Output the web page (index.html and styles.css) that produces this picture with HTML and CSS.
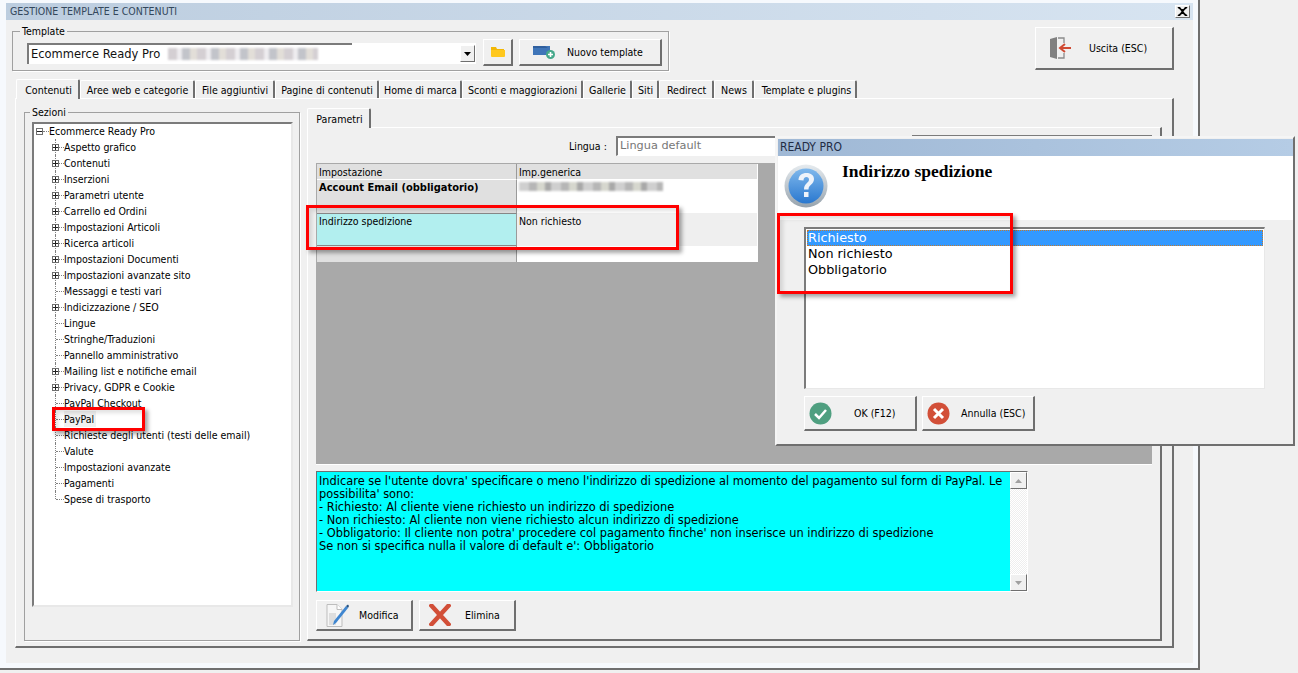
FILE: index.html
```html
<!DOCTYPE html>
<html lang="it">
<head>
<meta charset="utf-8">
<title>Gestione template e contenuti</title>
<link rel="stylesheet" href="styles.css">
</head>
<body>
<div class="window">
  <div class="inner">
    <div class="titlebar">
      <span>GESTIONE TEMPLATE E CONTENUTI</span>
      <span class="close">
        <svg width="11" height="9" viewBox="0 0 11 9"><path d="M1 0l4.500 3.500L10 0M1 9l4.500-3.500L10 9M2 0l7 9M9 0l-7 9" fill="none" stroke="#000" stroke-width="1.600"/></svg>
      </span>
    </div>

    <div class="topbar">
      <fieldset class="group template-group">
        <legend>Template</legend>
        <div class="template-row">
          <div class="combo">
            <span class="combo-text">Ecommerce Ready Pro</span>
            <span class="blur blur-a"></span>
            <span class="combo-arrow"><svg width="7" height="4" viewBox="0 0 7 4"><path d="M0 0h7L3.500 4z" fill="#000"/></svg></span>
          </div>
          <button class="btn btn-folder" type="button">
            <svg width="14" height="10" viewBox="0 0 14 10"><path d="M0 0h5l1 2h7v2H0z" fill="#f2b705"/><path d="M0 3h14v6a1 1 0 0 1-1 1H1a1 1 0 0 1-1-1z" fill="#ffc81e"/></svg>
          </button>
          <button class="btn btn-new" type="button">
            <svg width="23" height="13" viewBox="0 0 23 13"><rect x="0" y="0" width="17" height="9" fill="#3f75b8"/><path d="M0 0h12l3 2H0z" fill="#2f5f9e"/><circle cx="17.500" cy="8.500" r="4.500" fill="#45a88a"/><path d="M17.500 6v5M15 8.500h5" stroke="#fff" stroke-width="1.600"/></svg>
            <span>Nuovo template</span>
          </button>
        </div>
      </fieldset>
      <button class="btn btn-exit" type="button">
        <svg width="21" height="22" viewBox="0 0 21 22"><path d="M0 2l7-2v22l-7-2z" fill="#808080"/><path d="M8 1h6v5M14 16v5H8" fill="none" stroke="#8a8a8a" stroke-width="1.300"/><path d="M21 11H11M15 7l-5 4 5 4" fill="none" stroke="#cf4a33" stroke-width="2"/></svg>
        <span>Uscita (ESC)</span>
      </button>
    </div>

    <div class="tabs main-tabs">
      <span class="tab active">Contenuti</span>
      <span class="tab w-aree">Aree web e categorie</span>
      <span class="tab w-file">File aggiuntivi</span>
      <span class="tab w-pagine">Pagine di contenuti</span>
      <span class="tab w-home">Home di marca</span>
      <span class="tab w-sconti">Sconti e maggiorazioni</span>
      <span class="tab w-gallerie">Gallerie</span>
      <span class="tab w-siti">Siti</span>
      <span class="tab w-redirect">Redirect</span>
      <span class="tab w-news">News</span>
      <span class="tab w-plugins">Template e plugins</span>
    </div>

    <div class="tab-panel">
      <fieldset class="group sezioni">
        <legend>Sezioni</legend>
        <div class="tree">
          <div class="tree-root"><i class="box minus"></i><i class="dash"></i>Ecommerce Ready Pro</div>
          <div class="node"><i class="box"></i><i class="dash"></i>Aspetto grafico</div>
          <div class="node"><i class="box"></i><i class="dash"></i>Contenuti</div>
          <div class="node"><i class="box"></i><i class="dash"></i>Inserzioni</div>
          <div class="node"><i class="box"></i><i class="dash"></i>Parametri utente</div>
          <div class="node"><i class="box"></i><i class="dash"></i>Carrello ed Ordini</div>
          <div class="node"><i class="box"></i><i class="dash"></i>Impostazioni Articoli</div>
          <div class="node"><i class="box"></i><i class="dash"></i>Ricerca articoli</div>
          <div class="node"><i class="box"></i><i class="dash"></i>Impostazioni Documenti</div>
          <div class="node"><i class="box"></i><i class="dash"></i>Impostazioni avanzate sito</div>
          <div class="node leaf"><i class="dash"></i>Messaggi e testi vari</div>
          <div class="node"><i class="box"></i><i class="dash"></i>Indicizzazione / SEO</div>
          <div class="node leaf"><i class="dash"></i>Lingue</div>
          <div class="node leaf"><i class="dash"></i>Stringhe/Traduzioni</div>
          <div class="node leaf"><i class="dash"></i>Pannello amministrativo</div>
          <div class="node"><i class="box"></i><i class="dash"></i>Mailing list e notifiche email</div>
          <div class="node"><i class="box"></i><i class="dash"></i>Privacy, GDPR e Cookie</div>
          <div class="node leaf"><i class="dash"></i>PayPal Checkout</div>
          <div class="node leaf"><i class="dash"></i><span class="selected-node">PayPal</span></div>
          <div class="node leaf"><i class="dash"></i>Richieste degli utenti (testi delle email)</div>
          <div class="node leaf"><i class="dash"></i>Valute</div>
          <div class="node leaf"><i class="dash"></i>Impostazioni avanzate</div>
          <div class="node leaf"><i class="dash"></i>Pagamenti</div>
          <div class="node leaf last"><i class="dash"></i>Spese di trasporto</div>
        </div>
      </fieldset>

      <div class="params">
        <div class="tabs sub-tabs"><span class="tab active">Parametri</span></div>
        <div class="sub-panel">
          <div class="lang-row">
            <span class="lang-label">Lingua :</span>
            <span class="lang-input">Lingua default</span>
            <span class="lang-other"></span>
          </div>
          <div class="grid-area">
            <div class="table">
              <div class="cell head c1">Impostazione</div>
              <div class="cell head c2">Imp.generica</div>
              <div class="cell fixed c1 bold h33">Account Email (obbligatorio)</div>
              <div class="cell c2 h33"><span class="blur blur-b"></span></div>
              <div class="cell sel c1 h33">Indirizzo spedizione</div>
              <div class="cell alt c2 h33">Non richiesto</div>
              <div class="cell fixed c1 h16"></div>
              <div class="cell c2 h16"></div>
            </div>
          </div>
          <div class="desc">
            <div class="desc-text">Indicare se l'utente dovra' specificare o meno l'indirizzo di spedizione al momento del pagamento sul form di PayPal. Le possibilita' sono:<br>- Richiesto: Al cliente viene richiesto un indirizzo di spedizione<br>- Non richiesto: Al cliente non viene richiesto alcun indirizzo di spedizione<br>- Obbligatorio: Il cliente non potra' procedere col pagamento finche' non inserisce un indirizzo di spedizione<br>Se non si specifica nulla il valore di default e': Obbligatorio</div>
            <div class="scrollbar">
              <span class="sb-btn"><svg width="7" height="4" viewBox="0 0 7 4"><path d="M3.500 0L7 4H0z" fill="#a0a0a0"/></svg></span>
              <span class="sb-track"></span>
              <span class="sb-btn"><svg width="7" height="4" viewBox="0 0 7 4"><path d="M0 0h7L3.500 4z" fill="#a0a0a0"/></svg></span>
            </div>
          </div>
          <div class="actions">
            <button class="btn btn-act" type="button">
              <svg width="24" height="23" viewBox="0 0 24 23"><path d="M1 .500h10l5 5v17H1z" fill="#f6f6f6" stroke="#bdbdbd"/><path d="M11 .500v5h5" fill="#fff" stroke="#bdbdbd"/><rect x="3" y="9" width="7" height="12" fill="#dedede"/><path d="M8 17l-1 4 3-2L22 4l-2-2z" fill="#3f86d0"/><path d="M20 2l2 2 1-2-1-1.500z" fill="#23507f"/></svg>
              <span>Modifica</span>
            </button>
            <button class="btn btn-act" type="button">
              <svg class="x-big" width="22" height="22" viewBox="0 0 22 22"><path d="M1 0l20 22M21 0L1 22" fill="none" stroke="#d24f38" stroke-width="4.500"/></svg>
              <span>Elimina</span>
            </button>
          </div>
        </div>
      </div>
    </div>
  </div>
</div>

<div class="dialog">
  <div class="dlg-title">READY PRO</div>
  <div class="dlg-head">
    <svg width="44" height="44" viewBox="0 0 44 44">
      <defs>
        <linearGradient id="ring" x1="0" y1="0" x2="0" y2="1"><stop offset="0" stop-color="#e6ebef"/><stop offset="1" stop-color="#97a3ad"/></linearGradient>
        <linearGradient id="ball" x1="0" y1="0" x2="0" y2="1"><stop offset="0" stop-color="#7fb8ec"/><stop offset="1" stop-color="#2a78cf"/></linearGradient>
      </defs>
      <circle cx="22" cy="22" r="21.500" fill="url(#ring)"/>
      <circle cx="22" cy="22" r="17.500" fill="url(#ball)"/>
      <path d="M14.500 16c0-4.500 3.500-7 8-7s7.500 2.500 7.500 6c0 5.500-5.500 5.500-5.500 10.500h-4.500c0-6.500 5-6.500 5-10 0-1.500-1-2.500-2.500-2.500-2 0-3 1.500-3 3.500z" fill="#eef3fa"/>
      <rect x="20" y="28" width="4.500" height="5" fill="#eef3fa"/>
    </svg>
    <div class="dlg-heading">Indirizzo spedizione</div>
  </div>
  <div class="dlg-body">
    <div class="listbox">
      <div class="opt opt-sel">Richiesto</div>
      <div class="opt">Non richiesto</div>
      <div class="opt">Obbligatorio</div>
    </div>
    <div class="dlg-actions">
      <button class="btn btn-dlg" type="button">
        <svg width="23" height="23" viewBox="0 0 23 23"><circle cx="11.500" cy="11.500" r="11" fill="#4f9f80"/><path d="M6 12l4 4 7-8" fill="none" stroke="#fff" stroke-width="2.500"/></svg>
        <span class="dlg-ok">OK (F12)</span>
      </button>
      <button class="btn btn-dlg" type="button">
        <svg width="23" height="23" viewBox="0 0 23 23"><circle cx="11.500" cy="11.500" r="11" fill="#d24f38"/><path d="M7 7l9 9M16 7l-9 9" fill="none" stroke="#fff" stroke-width="3"/></svg>
        <span>Annulla (ESC)</span>
      </button>
    </div>
  </div>
</div>

<div class="mark mark-paypal"></div>
<div class="mark mark-row"></div>
<div class="mark mark-list"></div>
</body>
</html>
```
FILE: styles.css
```css
* { box-sizing: border-box; }
html, body { margin: 0; padding: 0; }
body {
  position: relative;
  width: 1298px;
  height: 673px;
  overflow: hidden;
  background: #f0f0f0;
  color: #000;
  font: 10.500px/13px "DejaVu Sans", sans-serif;
  font-stretch: condensed;
}
.window {
  width: 1200px;
  height: 670px;
  border-right: 2px solid #6f6f6f;
  border-bottom: 2px solid #6f6f6f;
}
.inner {
  height: 668px;
  border-style: solid;
  border-color: #f6f9fd;
  border-width: 3px 5px 5px 6px;
  background: #f0f0f0;
}
.titlebar {
  display: flex;
  align-items: center;
  justify-content: space-between;
  height: 17px;
  padding: 0 3px 0 4px;
  background: linear-gradient(90deg, #bccddf, #d7e4f1);
  color: #33475b;
}
.close {
  display: flex;
  align-items: center;
  justify-content: center;
  width: 15px;
  height: 13px;
  background: #f0f0f0;
  border: 1px solid;
  border-color: #fff #6f6f6f #6f6f6f #fff;
}
.btn {
  display: flex;
  align-items: center;
  margin: 0;
  padding: 0;
  background: #f0f0f0;
  color: #000;
  font: inherit;
  font-stretch: condensed;
  white-space: nowrap;
  border-style: solid;
  border-width: 1px 2px 2px 1px;
  border-color: #fff #6f6f6f #6f6f6f #fff;
}
.group {
  margin: 0;
  padding: 0;
  border: 1px solid #a0a0a0;
  box-shadow: 1px 1px 0 #fff;
}
.group legend {
  padding: 0 2px;
  line-height: 13px;
}
.topbar {
  display: flex;
  align-items: flex-start;
  justify-content: space-between;
  height: 58px;
  padding: 5px 19px 0 6px;
}
.template-group {
  width: 657px;
  height: 46px;
  padding: 1px 0 0 0;
}
.template-group legend { margin-left: 7px; }
.template-row { display: flex; align-items: flex-start; margin-left: 14px; }
.combo {
  display: flex;
  align-items: center;
  position: relative;
  width: 449px;
  height: 21px;
  margin-top: 4px;
  padding-top: 1px;
  background: linear-gradient(#7b7b7b, #7b7b7b) 0 0 / 323px 2px no-repeat, #fff;
  border-left: 2px solid #7b7b7b;
  font: 11.500px/16px "DejaVu Sans", sans-serif;
  color: #111;
}
.combo-text { padding-left: 2px; }
.blur { display: inline-block; filter: blur(1px); }
.blur-a {
  width: 150px;
  height: 12px;
  margin-left: 8px;
  background: repeating-linear-gradient(90deg, #d4cfd3 0 9px, #eeecef 9px 14px, #c2c4ca 14px 22px, #e2ded8 22px 29px);
}
.blur-b {
  width: 144px;
  height: 9px;
  background: repeating-linear-gradient(90deg, #cfcfcf 0 10px, #b6b6b6 10px 18px, #d6d7ce 18px 26px, #a8a8a8 26px 32px);
}
.combo-arrow {
  display: flex;
  align-items: center;
  justify-content: center;
  position: absolute;
  right: 1px;
  top: 2px;
  width: 15px;
  height: 17px;
  background: #f0f0f0;
  border: 1px solid;
  border-color: #fff #6f6f6f #6f6f6f #fff;
}
.btn-folder {
  justify-content: center;
  width: 30px;
  height: 27px;
  margin-left: 7px;
}
.btn-new {
  width: 143px;
  height: 27px;
  margin-left: 6px;
  padding-left: 13px;
}
.btn-new span { margin-left: 11px; }
.btn-exit {
  width: 139px;
  height: 43px;
  margin-top: 2px;
  padding-left: 14px;
}
.btn-exit span { margin-left: 18px; }

.tabs { display: flex; align-items: flex-end; }
.main-tabs { height: 20px; padding-left: 10px; }
.tab {
  display: flex;
  align-items: center;
  justify-content: center;
  width: 64px;
  height: 18px;
  padding: 2px 0 0 1px;
  background: #f0f0f0;
  border-style: solid;
  border-width: 1px 2px 0 1px;
  border-color: #fff #6f6f6f #fff #fff;
  border-radius: 2px 2px 0 0;
  white-space: nowrap;
  font-size: 10.600px;
}
.tab.active { height: 20px; position: relative; top: 1px; padding-left: 2px; }
.w-aree { width: 115px; }
.w-file { width: 80px; }
.w-pagine { width: 104px; }
.w-home { width: 83px; }
.w-sconti { width: 121px; }
.w-gallerie { width: 49px; }
.w-siti { width: 27px; }
.w-redirect { width: 55px; }
.w-news { width: 40px; }
.w-plugins { width: 103px; padding-left: 3px; }

.tab-panel {
  display: flex;
  align-items: flex-start;
  width: 1159px;
  height: 550px;
  margin-left: 9px;
  padding: 3px 0 0 8px;
  border-style: solid;
  border-width: 1px 2px 2px 1px;
  border-color: #fff #6f6f6f #6f6f6f #fff;
}
.sezioni {
  flex: none;
  width: 276px;
  height: 535px;
  margin-top: 4px;
  padding: 3px 0 0 0;
}
.sezioni legend { margin-left: 5px; }
.tree {
  height: 485px;
  margin: 0 6px 0 7px;
  background: #fff;
  border-style: solid;
  border-width: 2px 2px 2px 2px;
  border-color: #7b7b7b #e8e8e8 #e8e8e8 #7b7b7b;
  line-height: 16px;
}
.tree-root, .node {
  display: flex;
  align-items: center;
  position: relative;
  height: 16px;
  white-space: nowrap;
}
.tree-root { padding-left: 2px; margin-top: -1px; }
.tree-root .dash { width: 6px; }
.node { padding-left: 18px; }
.node::before {
  content: "";
  position: absolute;
  left: 21px;
  top: 0;
  bottom: 0;
  border-left: 1px dotted #808080;
}
.node.last::before { bottom: 8px; }
.leaf { padding-left: 22px; }
.box {
  position: relative;
  z-index: 1;
  flex: none;
  width: 7px;
  height: 7px;
  border: 1px solid #707070;
  background:
    linear-gradient(#222, #222) center / 5px 1px no-repeat,
    linear-gradient(#222, #222) center / 1px 5px no-repeat,
    #fff;
}
.box.minus {
  background: linear-gradient(#222, #222) center / 5px 1px no-repeat, #fff;
}
.dash {
  flex: none;
  width: 5px;
  border-top: 1px dotted #808080;
}
.leaf .dash { width: 8px; }
.selected-node { padding: 0 2px 0 0; background: #f0f0f0; }

.params { flex: none; width: 855px; margin-left: 7px; margin-top: 5px; }
.sub-tabs { height: 20px; padding-left: 0; }
.sub-panel {
  display: flex;
  flex-direction: column;
  height: 514px;
  padding: 0 8px 0 8px;
  border-style: solid;
  border-width: 1px 2px 2px 1px;
  border-color: #fff #6f6f6f #6f6f6f #fff;
}
.lang-row {
  display: flex;
  align-items: flex-start;
  height: 35px;
  padding-top: 8px;
}
.lang-label { margin: 4px 0 0 253px; width: 47px; }
.lang-input {
  width: 197px;
  height: 20px;
  padding-left: 2px;
  background: #fff;
  border-style: solid;
  border-width: 2px 0 1px 2px;
  border-color: #7b7b7b #fff #fff #7b7b7b;
  color: #777;
  font: 11.300px/15px "DejaVu Sans", sans-serif;
}
.lang-other {
  width: 240px;
  height: 20px;
  margin: -1px 0 0 99px;
  background: #fff;
  border-top: 2px solid #7b7b7b;
}
.grid-area {
  flex: none;
  width: 836px;
  height: 302px;
  background: #a9a9a9;
  border-bottom: 1px solid #fff;
  padding: 1px 0 0 1px;
}
.table {
  display: grid;
  grid-template-columns: 200px 240px;
  width: 441px;
  background: #fff;
  border: 1px solid #fff;
  border-width: 0 1px 0 0;
}
.cell { padding-left: 2px; overflow: hidden; white-space: nowrap; }
.head { height: 16px; background: #e0e0e0; line-height: 17px; border-bottom: 1px solid #fff; }
.c1 { border-right: 1px solid #9a9a9a; }
.h33 { height: 33px; line-height: 15px; }
.h16 { height: 16px; }
.fixed { background: #e0e0e0; }
.bold { font-weight: bold; font-size: 11px; }
.sel { background: #b2efef; border-top: 1px solid #888; border-bottom: 1px solid #888; }
.alt { background: #efefef; padding-top: 1px; }
.desc {
  display: flex;
  flex: none;
  width: 712px;
  height: 121px;
  margin-top: 6px;
  background: #0ff;
  border-style: solid;
  border-width: 1px;
  border-color: #6f6f6f #fff #fff #6f6f6f;
}
.desc-text {
  flex: 1;
  padding: 3px 0 0 2px;
  font: 11.400px/13px "DejaVu Sans", sans-serif;
  color: #000;
}
.scrollbar {
  display: flex;
  flex-direction: column;
  flex: none;
  width: 17px;
  background: #f4f4f4;
}
.sb-btn {
  display: flex;
  align-items: center;
  justify-content: center;
  height: 17px;
  background: #f0f0f0;
  border: 1px solid;
  border-color: #fff #6f6f6f #6f6f6f #fff;
}
.sb-track {
  flex: 1;
  background: repeating-conic-gradient(#fff 0 25%, #eee 0 50%) 0 0 / 2px 2px;
}
.actions { display: flex; gap: 6px; margin-top: 8px; }
.btn-act { width: 97px; height: 31px; padding-left: 9px; }
.btn-act span { margin-left: 9px; }
.btn-act .x-big + span { margin-left: 14px; }

.dialog {
  position: absolute;
  left: 775px;
  top: 136px;
  width: 520px;
  height: 310px;
  background: #f0f0f0;
  border-style: solid;
  border-width: 2px;
  border-color: #f5f5f5 #6f6f6f #6f6f6f #f5f5f5;
  padding: 1px 0 0 1px;
}
.dlg-title {
  height: 17px;
  padding: 2px 0 0 2px;
  background: linear-gradient(90deg, #9fb8d5, #b5cce5);
  color: #1f2c44;
  font-size: 12px;
}
.dlg-head {
  display: flex;
  align-items: flex-start;
  height: 64px;
  padding: 8px 0 0 6px;
  background: #fff;
}
.dlg-heading {
  margin: -3px 0 0 14px;
  font: bold 17.500px/20px "Liberation Serif", serif;
}
.dlg-body { padding: 7px 0 0 26px; }
.listbox {
  width: 461px;
  height: 162px;
  padding: 1px;
  background: #fff;
  border-style: solid;
  border-width: 2px 1px 1px 2px;
  border-color: #7b7b7b #e8e8e8 #e8e8e8 #7b7b7b;
  font: 12.800px/16px "DejaVu Sans", sans-serif;
}
.opt { height: 16px; padding-left: 1px; }
.opt-sel { background: #39f; color: #fff; outline: 1px dotted #c47a2c; outline-offset: -1px; }
.dlg-actions { display: flex; gap: 5px; margin-top: 7px; }
.btn-dlg { width: 113px; height: 35px; padding-left: 4px; }
.btn-dlg span { margin-left: 11px; }
.btn-dlg .dlg-ok { margin-left: 22px; }

.mark {
  position: absolute;
  border: 3px solid #f00;
  box-shadow: 3px 3px 4px rgba(0, 0, 0, .35), inset 3px 3px 4px rgba(0, 0, 0, .12);
}
.mark-paypal { left: 52px; top: 407px; width: 93px; height: 24px; }
.mark-row { left: 306px; top: 205px; width: 373px; height: 45px; }
.mark-list { left: 777px; top: 213px; width: 236px; height: 81px; }
```
